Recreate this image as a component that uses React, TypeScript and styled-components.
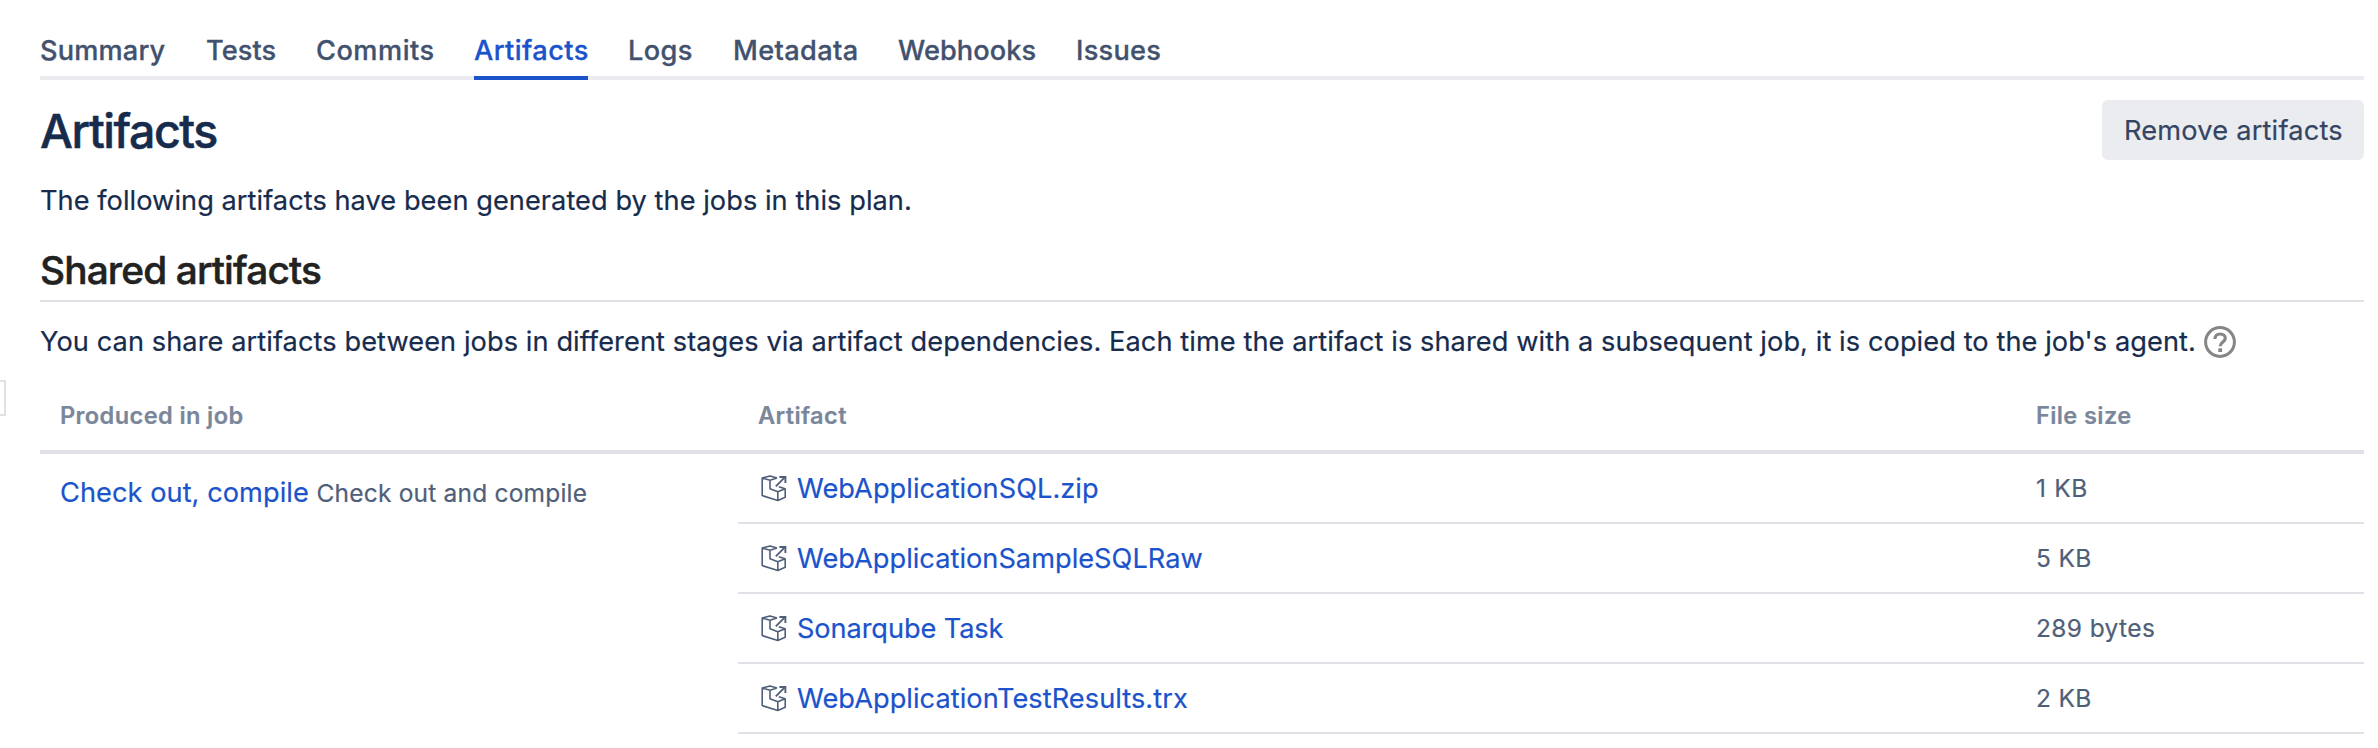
import React from "react";
import styled, { createGlobalStyle } from "styled-components";

const GlobalStyle = createGlobalStyle`
  * { box-sizing: border-box; }
  body {
    margin: 0;
    background: #fff;
    color: #172b4d;
    font-family: Inter, "Liberation Sans", sans-serif;
    font-size: 27.2px;
    -webkit-text-stroke-width: 0.2px;
  }
  h1, h2, p { margin: 0; }
`;

const Page = styled.div`
  display: flex;
  align-items: flex-start;
  height: 748px;
  overflow: hidden;
`;

const SidebarHandle = styled.div`
  flex: none;
  width: 6px;
  height: 36px;
  margin: 380px 34px 0 0;
  border: 2px solid #dfe1e6;
  border-left: 0;
`;

const Main = styled.main`
  width: 2324px;
`;

const Tabs = styled.nav`
  display: flex;
  gap: 40px;
  height: 80px;
  padding-top: 30px;
  box-shadow: inset 0 -4px #ebecf0;
`;

const Tab = styled.a<{ $width: number; $spacing: number; $active?: boolean }>`
  width: ${(p) => p.$width}px;
  height: 50px;
  line-height: 42px;
  font-weight: 500;
  -webkit-text-stroke-width: 0.3px;
  white-space: nowrap;
  letter-spacing: ${(p) => p.$spacing}px;
  color: ${(p) => (p.$active ? "#1b53cb" : "#42526e")};
  border-bottom: 4px solid ${(p) => (p.$active ? "#1b53cb" : "transparent")};
`;

const Header = styled.header`
  display: flex;
  justify-content: space-between;
  align-items: flex-start;
  height: 100px;
  padding-top: 20px;
`;

const Title = styled.h1`
  font-size: 46.5px;
  font-weight: 500;
  line-height: 62px;
  letter-spacing: -1.43px;
  -webkit-text-stroke-width: 0.5px;
`;

const Button = styled.button`
  width: 262px;
  height: 60px;
  padding: 0 22px;
  border: 0;
  border-radius: 6px;
  background: #ebecf0;
  color: #344563;
  font: 400 27.2px/62px Inter, "Liberation Sans", sans-serif;
  letter-spacing: 0.2px;
  text-align: left;
  white-space: nowrap;
`;

const Intro = styled.p`
  height: 60px;
  line-height: 42px;
  letter-spacing: 0.047px;
`;

const SectionTitle = styled.h2`
  height: 62px;
  border-bottom: 2px solid #dfe1e6;
  color: #222;
  font-size: 38.8px;
  font-weight: 500;
  line-height: 60px;
  letter-spacing: -0.86px;
  -webkit-text-stroke-width: 0.5px;
`;

const Description = styled.p`
  display: flex;
  align-items: center;
  height: 80px;
  line-height: 82px;
  letter-spacing: 0.075px;
  white-space: nowrap;
`;

const Help = styled.svg`
  margin-left: 8px;
`;

const Table = styled.div`
  display: grid;
  grid-template-columns: 698px 1278px 348px;
`;

const HeadCell = styled.div`
  height: 72px;
  padding: 14px 20px 0;
  border-bottom: 4px solid #dfe1e6;
  color: #7a869a;
  font-size: 23.6px;
  font-weight: 600;
  line-height: 40px;
  letter-spacing: 0.38px;
`;

const JobCell = styled.div`
  grid-row: span 4;
  padding: 19px 20px 0;
  line-height: 40px;
  white-space: nowrap;
`;

const Cell = styled.div`
  display: flex;
  align-items: center;
  height: 70px;
  padding: 0 20px;
  border-bottom: 2px solid #dfe1e6;
`;

const Link = styled.a<{ $spacing?: number }>`
  color: #1b53cb;
  letter-spacing: ${(p) => p.$spacing ?? 0}px;
`;

const Note = styled.span<{ $spacing?: number }>`
  color: #505f79;
  font-size: 24.5px;
  letter-spacing: ${(p) => p.$spacing ?? 0.2}px;
`;

const Icon = styled.svg`
  flex: none;
  margin: 0 9px 0 2px;
`;

const ArtifactIcon = () => (
  <Icon width="28" height="28" viewBox="0 0 28 28" fill="none" stroke="#505f79" strokeWidth="1.6" strokeLinejoin="round">
    <path d="M17 4.1 10 6.3 2.2 4 10 1.9l7 2.2M2.2 4v17.6l15.6 4.8 7.4-3.1v-8.6l-7.4 3-7.8-3V6.3M17.8 17.7v8.7M25.2 14.7l-6.4-2" />
    <path d="M15.8 12.4 24.5 3.7" strokeWidth="1.9" />
    <path d="M19.4 3h6v6" strokeWidth="1.9" strokeLinejoin="miter" />
  </Icon>
);

const HelpIcon = () => (
  <Help width="32" height="32" viewBox="0 0 32 32" fill="none" stroke="#858585">
    <circle cx="16" cy="16" r="14.4" strokeWidth="3" />
    <path d="M10.9 13c0-3 2.1-5 5.3-5 3 0 5.1 1.8 5.1 4.3 0 3.7-5.1 3.7-5.1 8" strokeWidth="3.2" />
    <path d="M16.2 22.3v3.7" strokeWidth="3.8" />
  </Help>
);

const tabs: [string, number, number][] = [
  ["Summary", 126, 0.15],
  ["Tests", 70, 0.05],
  ["Commits", 118, 0.5],
  ["Artifacts", 114, 0.43],
  ["Logs", 65, 0.4],
  ["Metadata", 125, 0.35],
  ["Webhooks", 138, 0.05],
  ["Issues", 85, 0.25],
];

const artifacts = [
  { name: "WebApplicationSQL.zip", spacing: 0.04, size: "1 KB", sizeSpacing: 0.65 },
  { name: "WebApplicationSampleSQLRaw", spacing: 0.02, size: "5 KB", sizeSpacing: 0.35 },
  { name: "Sonarqube Task", spacing: -0.1, size: "289 bytes", sizeSpacing: 0.38 },
  { name: "WebApplicationTestResults.trx", spacing: 0.05, size: "2 KB", sizeSpacing: 0.35 },
];

export default function App() {
  return (
    <Page>
      <GlobalStyle />
      <SidebarHandle />
      <Main>
        <Tabs>
          {tabs.map(([label, width, spacing]) => (
            <Tab key={label} $width={width} $spacing={spacing} $active={label === "Artifacts"}>
              {label}
            </Tab>
          ))}
        </Tabs>
        <Header>
          <Title>Artifacts</Title>
          <Button>Remove artifacts</Button>
        </Header>
        <Intro>The following artifacts have been generated by the jobs in this plan.</Intro>
        <SectionTitle>Shared artifacts</SectionTitle>
        <Description>
          You can share artifacts between jobs in different stages via artifact dependencies. Each time the artifact is
          shared with a subsequent job, it is copied to the job's agent.
          <HelpIcon />
        </Description>
        <Table>
          <HeadCell>Produced in job</HeadCell>
          <HeadCell>Artifact</HeadCell>
          <HeadCell>File size</HeadCell>
          <JobCell>
            <Link $spacing={0.05}>Check out, compile</Link> <Note>Check out and compile</Note>
          </JobCell>
          {artifacts.map((a) => (
            <React.Fragment key={a.name}>
              <Cell>
                <ArtifactIcon />
                <Link $spacing={a.spacing}>{a.name}</Link>
              </Cell>
              <Cell>
                <Note $spacing={a.sizeSpacing}>{a.size}</Note>
              </Cell>
            </React.Fragment>
          ))}
        </Table>
      </Main>
    </Page>
  );
}
